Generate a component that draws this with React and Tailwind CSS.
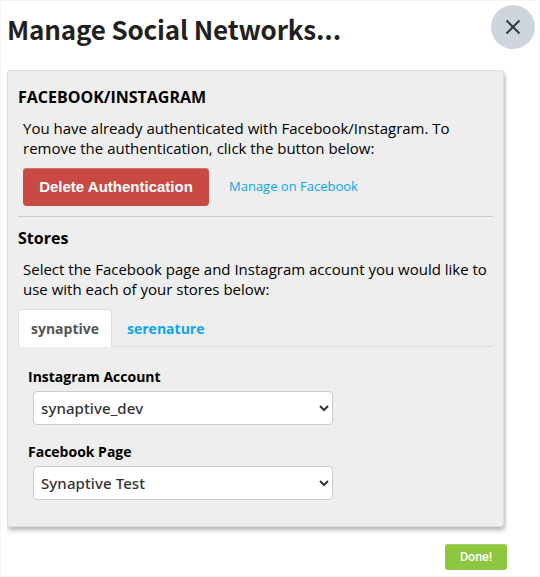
import React, { useState } from 'react';

const stores = ['synaptive', 'serenature'];

const SelectField = ({ label, name, options }) => (
    <div className="h-[75px]">
        <label htmlFor={name} className="block h-6 text-[14px] leading-5 font-bold text-black">
            {label}
        </label>
        <select
            id={name}
            name={name}
            className="ml-[5px] block h-[34px] w-[300px] rounded-[4px] border border-[#ccc] bg-white px-[3px] font-['Noto_Sans',sans-serif] text-[15px] font-medium tracking-[0.1px] text-[#333] outline-none"
        >
            {options.map((option) => (
                <option key={option}>{option}</option>
            ))}
        </select>
    </div>
);

const App = () => {
    const [activeStore, setActiveStore] = useState('synaptive');

    return (
        <div className="h-[577px] w-[540px] border border-[#f5f5f5] bg-white pl-1.5 font-['Open_Sans',sans-serif]">
            <header className="flex h-[69px] justify-between pt-1 pr-[4px]">
                <h1 className="pt-[6px] font-['Noto_Sans_CJK_SC',sans-serif] text-[26px] leading-[36px] font-bold tracking-[-0.17px] whitespace-nowrap text-[#231f20]">
                    Manage Social Networks...
                </h1>
                <button aria-label="Close" className="flex size-11 items-center justify-center rounded-full bg-[#ced5dd]">
                    <svg width="16" height="16" viewBox="0 0 16 16" fill="none" stroke="#373b40" strokeWidth="2">
                        <path d="M1.5 1.5l13 13M14.5 1.5l-13 13" />
                    </svg>
                </button>
            </header>

            <div className="h-[474px] w-[500px] overflow-hidden">
                <section className="h-[457px] w-[497px] rounded-[3px] border border-[#ddd] bg-[#eee] px-2.5 pt-4 shadow-[1px_3px_5px_rgba(0,0,0,0.3)]">
                    <h2 className="text-[16px] leading-5 font-bold text-black">FACEBOOK/INSTAGRAM</h2>
                    <p className="mt-[11px] ml-[5px] text-[15px] leading-5 whitespace-nowrap text-black">
                        You have already authenticated with Facebook/Instagram. To
                        <br />
                        remove the authentication, click the button below:
                    </p>
                    <div className="mt-[10px] ml-[5px] flex items-center gap-5">
                        <button className="h-[38px] w-[186px] rounded-[4px] bg-[#c94a45] font-['Liberation_Sans',sans-serif] text-[15px] font-bold text-white shadow-[inset_0_1px_0_#d4716d]">
                            Delete Authentication
                        </button>
                        <a href="#" className="text-[13px] whitespace-nowrap text-[#0ca5ed]">Manage on Facebook</a>
                    </div>
                    <hr className="mt-[10px] border-[#ccc]" />

                    <h2 className="mt-[11px] text-[16px] leading-5 font-bold text-black">Stores</h2>
                    <p className="mt-[11px] ml-[5px] text-[15px] leading-5 whitespace-nowrap text-black">
                        Select the Facebook page and Instagram account you would like to
                        <br />
                        use with each of your stores below:
                    </p>
                    <div className="mt-[10px] flex h-[38px] border-b border-[#ddd]">
                        {stores.map((store) => (
                            <button
                                key={store}
                                onClick={() => setActiveStore(store)}
                                className={`mr-0.5 h-[38px] rounded-t-[4px] border border-b-0 px-3 text-[14px] leading-5 font-bold ${
                                    activeStore === store
                                        ? 'border-[#ddd] bg-white text-[#555]'
                                        : 'border-transparent text-[#0ca5ed]'
                                }`}
                            >
                                {store}
                            </button>
                        ))}
                    </div>

                    <div className="pt-[20px] pl-2.5">
                        <SelectField label="Instagram Account" name="instagram" options={['synaptive_dev']} />
                        <SelectField label="Facebook Page" name="facebook" options={['Synaptive Test']} />
                    </div>
                </section>
            </div>

            <footer className="flex w-[500px] justify-end">
                <button className="h-[26px] w-[62px] rounded-[3px] bg-[#8dc63f] font-['Roboto',sans-serif] text-[12.5px] font-medium text-white shadow-[inset_0_1px_0_#a4d265]">
                    Done!
                </button>
            </footer>
        </div>
    );
};

export default App;
